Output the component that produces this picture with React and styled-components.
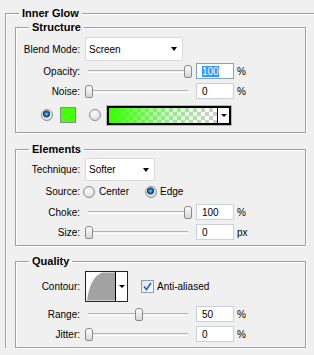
import React from "react";
import styled, { createGlobalStyle } from "styled-components";

const Global = createGlobalStyle`
  html, body { margin: 0; background: #f0f0f0; }
  body {
    width: 314px;
    height: 355px;
    overflow: hidden;
    font-family: "Liberation Sans", Arial, sans-serif;
    font-size: 10px;
    color: #000;
  }
`;

const Outer = styled.fieldset`
  margin: 7px 0 0 5px;
  padding: 0 8px 0 9px;
  border: 1px solid #a0a0a0;
  border-right: none;
  border-bottom: none;
  min-width: 0;
  box-shadow: inset 1px 1px 0 #fff;
`;

const Legend = styled.legend`
  font-weight: bold;
  font-size: 11px;
  line-height: 13px;
  padding: 0 3px;
  margin-left: ${(p) => p.$offset}px;
`;

const Group = styled.fieldset`
  margin: ${(p) => p.$mt}px 0 0 0;
  padding: ${(p) => p.$pt}px 0 3px 0;
  border: 1px solid #a0a0a0;
  min-width: 0;
  box-shadow: inset 1px 1px 0 #fff, 1px 1px 0 #fff;
`;

const Row = styled.div`
  display: flex;
  align-items: center;
  height: ${(p) => p.$h}px;
`;

const Label = styled.span`
  flex: none;
  width: 64px;
  margin-right: 5px;
  text-align: right;
  white-space: nowrap;
`;

const Select = styled.div`
  box-sizing: border-box;
  width: ${(p) => p.$w}px;
  height: ${(p) => p.$h}px;
  background: #fff;
  border: 1px solid #d9d9d9;
  border-radius: 2px;
  display: flex;
  align-items: center;
  justify-content: space-between;
  padding: 0 5px 0 3px;
`;

const Arrow = styled.span`
  width: 0;
  height: 0;
  border-left: 3.5px solid transparent;
  border-right: 3.5px solid transparent;
  border-top: 4px solid #000;
`;

const Slider = styled.div`
  position: relative;
  flex: none;
  width: 107px;
  height: 13px;
`;

const Track = styled.div`
  position: absolute;
  left: 3px;
  right: 4px;
  top: 5px;
  height: 1px;
  border-top: 1px solid #b4b4b4;
  border-bottom: 1px solid #fff;
`;

const Thumb = styled.div`
  position: absolute;
  top: 0;
  box-sizing: border-box;
  width: 8px;
  height: 13px;
  border: 1px solid #8a8a8a;
  border-radius: 3px 3px 2px 2px;
  background: linear-gradient(#fdfdfd, #d8d8d8);
`;

const Field = styled.div`
  box-sizing: border-box;
  width: 38px;
  height: 16px;
  margin-left: 4px;
  padding-left: 5px;
  display: flex;
  align-items: center;
  background: #fff;
  border: 1px solid ${(p) => (p.$focus ? "#7da2ce" : "#c9d0d8")};
`;

const Selected = styled.span`
  background: #3399ff;
  color: #fff;
`;

const Unit = styled.span`
  margin-left: 3px;
`;

const Radio = styled.span`
  flex: none;
  box-sizing: border-box;
  width: 12px;
  height: 12px;
  border-radius: 50%;
  border: 1px solid #8e8f8f;
  margin-left: ${(p) => p.$ml || 0}px;
  background: ${(p) =>
    p.$on
      ? "radial-gradient(circle at 45% 40%, #9bd8ff 0, #2a7fc0 1.5px, #0d4577 3px, #0d4577 3.3px, transparent 3.8px), radial-gradient(circle at 40% 35%, #fff, #d0d0d0)"
      : "radial-gradient(circle at 40% 35%, #fff, #d0d0d0)"};
`;

const RadioText = styled.span`
  margin-left: ${(p) => p.$ml}px;
`;

const Swatch = styled.span`
  flex: none;
  box-sizing: border-box;
  width: 16px;
  height: 16px;
  margin-left: 7px;
  border: 1px solid #8c8c8c;
  background: #46ff0a;
`;

const Gradient = styled.div`
  flex: none;
  box-sizing: border-box;
  display: flex;
  width: 124px;
  height: 19px;
  margin-left: 6px;
  border: 2px solid #000;
  box-shadow: 0 0 0 1px #b8b8b8;
`;

const GradientFill = styled.div`
  flex: 1;
  background: linear-gradient(to right, #33ff00, rgba(90, 255, 60, 0.35) 55%, rgba(120, 255, 90, 0)),
    repeating-conic-gradient(#cdcdcd 0 25%, #fff 0 50%) 0 0 / 8px 8px;
`;

const DropButton = styled.div`
  flex: none;
  width: 11px;
  display: flex;
  align-items: center;
  justify-content: center;
  background: #fff;
  border-left: 1px solid #000;
`;

const SmallArrow = styled.span`
  width: 0;
  height: 0;
  border-left: 3px solid transparent;
  border-right: 3px solid transparent;
  border-top: 3px solid #000;
`;

const Contour = styled.div`
  flex: none;
  box-sizing: border-box;
  display: flex;
  width: 43px;
  height: 31px;
  border: 1px solid #222;
  background: #fff;
`;

const Curve = styled.svg`
  display: block;
  width: 30px;
  height: 29px;
`;

const Check = styled.span`
  flex: none;
  box-sizing: border-box;
  width: 13px;
  height: 13px;
  margin-left: 13px;
  border: 1px solid #8b9bb0;
  background: linear-gradient(135deg, #dfe4ea, #fbfcfd);
  display: flex;
  align-items: center;
  justify-content: center;
`;

const CheckText = styled.span`
  margin-left: 3px;
`;

function SliderRow({ label, value, text, unit, focus }) {
  return (
    <Row $h={20}>
      <Label>{label}</Label>
      <Slider>
        <Track />
        <Thumb style={{ left: Math.round((value / 100) * 99) }} />
      </Slider>
      <Field $focus={focus}>{focus ? <Selected>{text}</Selected> : text}</Field>
      <Unit>{unit}</Unit>
    </Row>
  );
}

export default function App() {
  return (
    <>
      <Global />
      <Outer>
        <Legend $offset={4}>Inner Glow</Legend>

        <Group $mt={1} $pt={3}>
          <Legend $offset={13}>Structure</Legend>
          <Row $h={24}>
            <Label>Blend Mode:</Label>
            <Select $w={98} $h={24}>
              Screen
              <Arrow />
            </Select>
          </Row>
          <SliderRow label="Opacity:" value={100} text="100" unit="%" focus />
          <SliderRow label="Noise:" value={0} text="0" unit="%" />
          <Row $h={28}>
            <Radio $ml={25} $on />
            <Swatch />
            <Radio $ml={13} />
            <Gradient>
              <GradientFill />
              <DropButton>
                <SmallArrow />
              </DropButton>
            </Gradient>
          </Row>
        </Group>

        <Group $mt={10} $pt={2}>
          <Legend $offset={13}>Elements</Legend>
          <Row $h={23}>
            <Label>Technique:</Label>
            <Select $w={70} $h={23}>
              Softer
              <Arrow />
            </Select>
          </Row>
          <Row $h={21}>
            <Label>Source:</Label>
            <Radio $ml={-2} />
            <RadioText $ml={4}>Center</RadioText>
            <Radio $ml={16} $on />
            <RadioText $ml={3}>Edge</RadioText>
          </Row>
          <SliderRow label="Choke:" value={100} text="100" unit="%" />
          <SliderRow label="Size:" value={0} text="0" unit="px" />
        </Group>

        <Group $mt={9} $pt={3}>
          <Legend $offset={13}>Quality</Legend>
          <Row $h={31}>
            <Label>Contour:</Label>
            <Contour>
              <Curve viewBox="0 0 30 29">
                <path d="M1 29 C3 14 8 3 17 0 L30 0 L30 29 Z" fill="#a3a3a3" />
              </Curve>
              <DropButton>
                <SmallArrow />
              </DropButton>
            </Contour>
            <Check>
              <svg width="9" height="9" viewBox="0 0 9 9">
                <path d="M1 4.5 L3.5 7.5 L8 1" fill="none" stroke="#2f56c0" strokeWidth="1.6" />
              </svg>
            </Check>
            <CheckText>Anti-aliased</CheckText>
          </Row>
          <Row $h={2} />
          <SliderRow label="Range:" value={50} text="50" unit="%" />
          <SliderRow label="Jitter:" value={0} text="0" unit="%" />
        </Group>
      </Outer>
    </>
  );
}
